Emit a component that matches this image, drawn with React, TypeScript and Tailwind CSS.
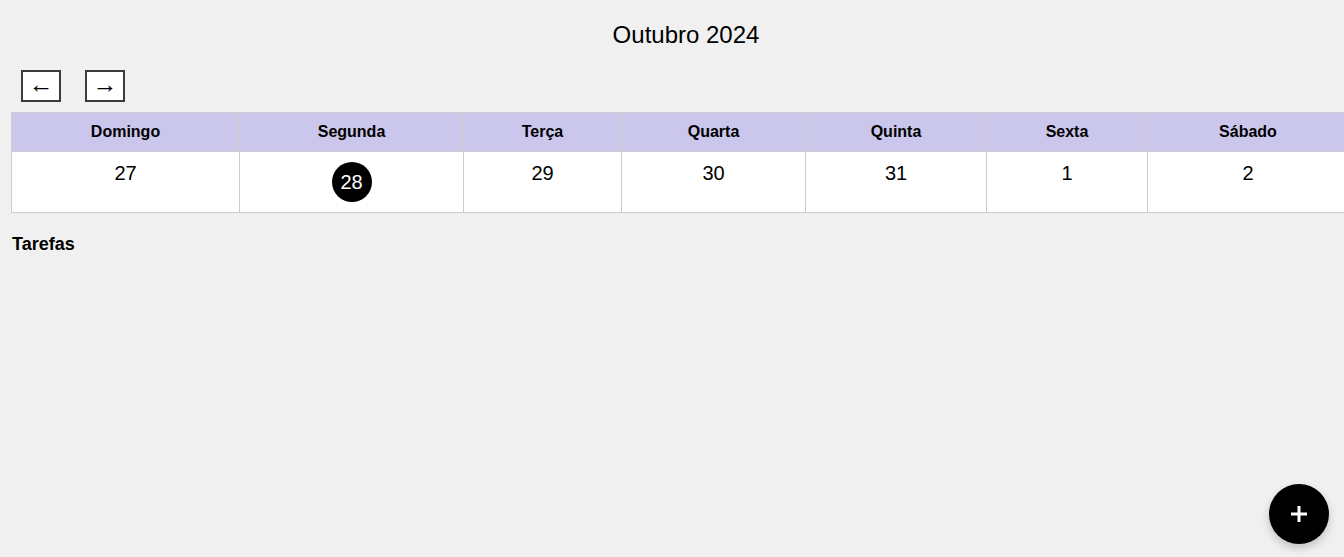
import React from 'react';

// Week header + column widths taken from the calendar table
const days = [
   { name: 'Domingo', day: 27, w: 'w-[228px]' },
   { name: 'Segunda', day: 28, w: 'w-[224px]', today: true },
   { name: 'Terça', day: 29, w: 'w-[158px]' },
   { name: 'Quarta', day: 30, w: 'w-[184px]' },
   { name: 'Quinta', day: 31, w: 'w-[181px]' },
   { name: 'Sexta', day: 1, w: 'w-[161px]' },
   { name: 'Sábado', day: 2, w: 'w-[201px]' }
];

function WeekTable () {
   return (
      <div className="flex border-t border-l border-[#cccccc] w-max">
         {days.map((d) => (
            <div key={d.name} className={`flex flex-col shrink-0 border-r border-[#cccccc] ${d.w}`}>
               <div className="flex justify-center items-center bg-[#cbc6ec] border-b border-[#cccccc] h-[39px] font-bold text-[16px]">
                  {d.name}
               </div>
               <div className="flex justify-center bg-white border-b border-[#cccccc] pt-[10px] h-[61px] text-[20px] leading-[23px]">
                  {d.today ? (
                     <span className="flex justify-center items-center bg-black rounded-full w-[40px] h-[40px] text-white">
                        {d.day}
                     </span>
                  ) : (
                     <span>{d.day}</span>
                  )}
               </div>
            </div>
         ))}
      </div>
   );
}

export default function App () {
   return (
      <div className="relative bg-[#f0f0f0] w-full h-[557px] overflow-hidden text-black font-['Liberation_Sans',Arial,sans-serif]">
         <div className="pt-[21px] w-[1372px] text-[24px] text-center leading-[28px]">Outubro 2024</div>

         <div className="pl-[11px]">
            {/* Navigation */}
            <div className="flex gap-[24px] mt-[21px] ml-[10px]">
               <button className="flex justify-center items-center bg-white pb-[4px] border-2 border-[#3b3b3b] w-[40px] h-[32px] text-[25px] leading-none">←</button>
               <button className="flex justify-center items-center bg-white pb-[4px] border-2 border-[#3b3b3b] w-[40px] h-[32px] text-[25px] leading-none">→</button>
            </div>

            <div className="mt-[10px]">
               <WeekTable />
            </div>

            <h3 className="mt-[18px] ml-[1px] font-bold text-[18px]">Tarefas</h3>
         </div>

         <button className="right-[15px] bottom-[13px] absolute flex justify-center items-center bg-black shadow-[0_4px_8px_rgba(0,0,0,0.2)] rounded-full w-[60px] h-[60px]">
            <svg width="16" height="16" viewBox="0 0 16 16">
               <rect x="6.5" y="0" width="3" height="16" fill="white" />
               <rect x="0" y="6.5" width="16" height="3" fill="white" />
            </svg>
         </button>
      </div>
   );
}
